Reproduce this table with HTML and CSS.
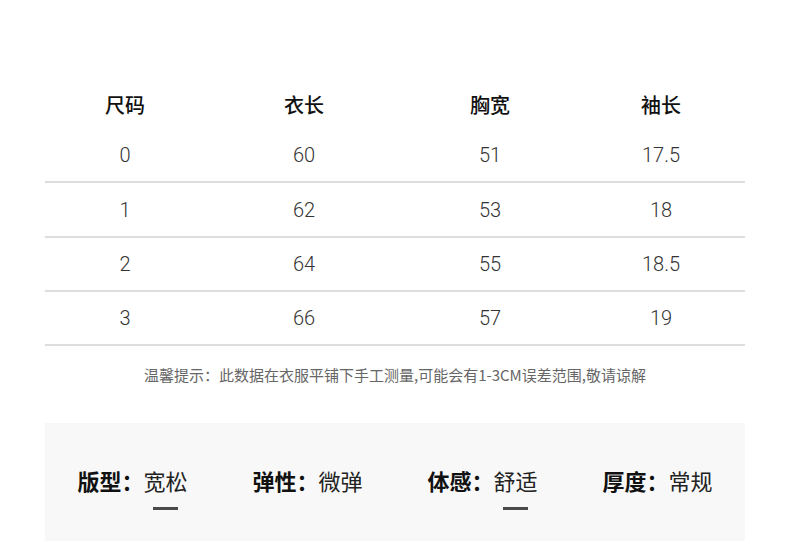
FILE: index.html
```html
<!DOCTYPE html>
<html lang="zh">
<head>
<meta charset="utf-8">
<link rel="stylesheet" href="styles.css">
</head>
<body>
<div class="page">
  <div class="table">
    <div class="row head">
      <div class="cell">尺码</div><div class="cell">衣长</div><div class="cell">胸宽</div><div class="cell">袖长</div>
    </div>
    <div class="row data">
      <div class="cell">0</div><div class="cell">60</div><div class="cell">51</div><div class="cell">17.5</div>
    </div>
    <div class="row data">
      <div class="cell">1</div><div class="cell">62</div><div class="cell">53</div><div class="cell">18</div>
    </div>
    <div class="row data short">
      <div class="cell">2</div><div class="cell">64</div><div class="cell">55</div><div class="cell">18.5</div>
    </div>
    <div class="row data short">
      <div class="cell">3</div><div class="cell">66</div><div class="cell">57</div><div class="cell">19</div>
    </div>
  </div>
  <p class="note">温馨提示：此数据在衣服平铺下手工测量,可能会有1-3CM误差范围,敬请谅解</p>
  <div class="panel">
    <div class="attr"><span class="label">版型：</span><span class="value marked">宽松</span></div>
    <div class="attr"><span class="label">弹性：</span><span class="value">微弹</span></div>
    <div class="attr"><span class="label">体感：</span><span class="value marked">舒适</span></div>
    <div class="attr"><span class="label">厚度：</span><span class="value">常规</span></div>
  </div>
</div>
</body>
</html>
```

FILE: styles.css
```css
* { box-sizing: border-box; }
html, body { margin: 0; padding: 0; background: #fff; }
body {
  font-family: "Noto Sans CJK SC", "Noto Sans", sans-serif;
  color: #111;
  width: 790px;
  height: 541px;
  overflow: hidden;
}
.page {
  padding: 80px 45px 0 45px;
}
.table {
  display: flex;
  flex-direction: column;
}
.row {
  display: grid;
  grid-template-columns: 160px 198px 174px 168px;
  align-items: center;
  justify-items: center;
}
.head {
  height: 48px;
  font-size: 20px;
  font-weight: 500;
  color: #111;
}
.data {
  height: 55px;
  border-bottom: 2px solid #dddddd;
  font-family: "Roboto", "Liberation Sans", sans-serif;
  font-weight: 300;
  font-size: 20px;
  color: #333;
}
.data.short {
  height: 54px;
}
.note {
  margin: 19px 0 0 0;
  text-align: center;
  font-size: 15px;
  color: #666;
  line-height: 20px;
}
.panel {
  margin-top: 38px;
  background: #f8f8f8;
  height: 130px;
  display: grid;
  grid-template-columns: repeat(4, 1fr);
  align-items: start;
  padding-top: 43px;
}
.attr {
  display: flex;
  justify-content: center;
  font-size: 22px;
  line-height: 28px;
}
.label {
  font-weight: 700;
  color: #111;
}
.value {
  position: relative;
  color: #222;
}
.marked::after {
  content: "";
  position: absolute;
  left: 0;
  right: 0;
  margin: 0 auto;
  width: 25px;
  height: 3px;
  top: 41px;
  background: #4a4a4a;
}
```
